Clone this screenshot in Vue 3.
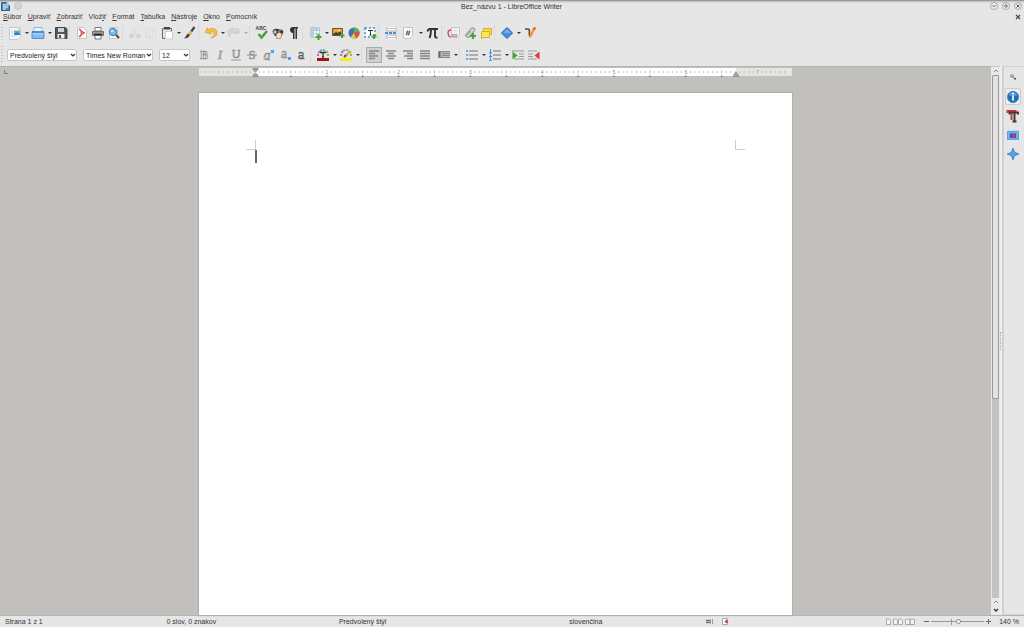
<script setup>
import { ref } from 'vue'

const menus = [
  ['', 'S', 'úbor'],
  ['', 'U', 'praviť'],
  ['', 'Z', 'obraziť'],
  ['Vlož', 'i', 'ť'],
  ['', 'F', 'ormát'],
  ['', 'T', 'abuľka'],
  ['', 'N', 'ástroje'],
  ['', 'O', 'kno'],
  ['', 'P', 'omocník']
]

const t = (icon, label, extra = {}) => ({ icon, label, ...extra })
const letter = (text, x, y, kind) => ({ letter: { text, x, y, kind } })

const standardBar = [
  { items: [t('new', 'Nový', { drop: true }), t('open', 'Otvoriť', { drop: true }), t('save', 'Uložiť')] },
  { items: [t('pdf', 'Exportovať ako PDF'), t('print', 'Tlačiť'), t('preview', 'Ukážka tlače')] },
  { items: [t('cut', 'Vystrihnúť', { off: true }), t('copy', 'Kopírovať', { off: true }), t('paste', 'Vložiť', { drop: true }), t('clone', 'Klonovať formátovanie')] },
  { items: [t('undo', 'Späť', { drop: true }), t('redo', 'Znovu', { drop: true, off: true })] },
  { items: [t('spell', 'Pravopis', letter('ABC', 7, 5, 'abc')), t('find', 'Nájsť a nahradiť'), t('pilcrow', 'Formátovacie znaky')] },
  { items: [t('table', 'Tabuľka', { drop: true }), t('image', 'Obrázok'), t('chart', 'Graf'), t('textbox', 'Textové pole')] },
  { roomy: true, items: [t('break', 'Zalomenie strany'), t('field', 'Pole', { drop: true }), t('pi', 'Špeciálny znak')] },
  { items: [t('footnote', 'Poznámka pod čiarou'), t('link', 'Odkaz'), t('comment', 'Komentár')] },
  { items: [t('shapes', 'Tvary', { drop: true }), t('draw', 'Kresba')] }
]

const formatBar = [
  {
    items: [
      t('bold', 'Tučné', letter('B', 8, 12, 'heavy')),
      t('italic', 'Kurzíva', letter('I', 8, 12, 'slant')),
      t('underline', 'Podčiarknuté', letter('U', 8, 11, 'plain')),
      t('strike', 'Prečiarknuté', letter('S', 8, 12, 'plain')),
      t('super', 'Horný index', letter('a', 7, 13, 'slant big')),
      t('sub', 'Dolný index', letter('a', 8, 11, 'plain big')),
      t('shadow', 'Tieň', letter('a', 9, 12, 'dark big'))
    ]
  },
  { items: [t('fontcolor', 'Farba písma', { drop: true }), t('highlight', 'Zvýraznenie', { drop: true })] },
  { roomy: true, items: [t('left', 'Zarovnať vľavo', { on: true }), t('center', 'Na stred'), t('right', 'Zarovnať vpravo'), t('justify', 'Do bloku')] },
  { plain: true, items: [t('spacing', 'Riadkovanie', { drop: true })] },
  { items: [t('bullets', 'Odrážky', { drop: true }), t('numbers', 'Číslovanie', { drop: true }), t('indent', 'Zväčšiť odsadenie'), t('outdent', 'Zmenšiť odsadenie')] }
]

const sidebar = [
  t('info', 'Vlastnosti', { on: true }),
  t('styles', 'Štýly'),
  t('gallery', 'Galéria'),
  t('navigator', 'Navigátor')
]

const inch = 71.8
const origin = 56
const ticks = []
for (let i = -12; i <= 118; i++) {
  const x = origin + (i * inch) / 16
  if (i !== 0 && i % 16 !== 0 && x > 1 && x < 592) ticks.push({ x, half: i % 8 === 0 })
}
const numbers = [1, 2, 3, 4, 5, 6, 7].map((n) => ({ n, x: origin + n * inch }))
const tabs = Array.from({ length: 13 }, (_, i) => origin + ((i + 1) * inch) / 2)

const style = ref('Predvolený štýl')
const font = ref('Times New Roman')
const size = ref('12')
const zoom = ref(51)
</script>

<template>
  <svg class="defs" aria-hidden="true">
    <symbol id="writer" viewBox="0 0 9 9"><path d="M.5.5h5l3 3v5h-8z" fill="#4a90bf" stroke="#285f83" /><path d="M2 3h3M2 5h5M2 7h3" stroke="#fff" /><path d="M5.500.5v3h3" fill="#d5e9f5" /></symbol>
    <symbol id="new" viewBox="0 0 16 16"><path d="M2.500 2.500h11v9l-3 3h-8z" fill="#f8f8f8" stroke="#c4cacd" /><path d="M7 5.500h6v4H7z" fill="#58b5e8" /><path d="m7 9 3-2 3 2v1H7z" fill="#3280bd" /><circle cx="12" cy="4" r="1.500" fill="#f3df73" /><path d="M4 6h2M4 8h2M4 11h6" stroke="#ccc" /></symbol>
    <symbol id="open" viewBox="0 0 16 16"><path d="M4 2.500h8v7H4z" fill="#eef4fb" stroke="#9bb7d5" /><path d="M2.500 6v7h11V6" fill="#4b8edb" stroke="#3b78be" /><path d="M2 7.500h12v6H2z" fill="#84bbf3" stroke="#538fd4" /><path d="M3 9h10" stroke="#b9dcfc" /></symbol>
    <symbol id="save" viewBox="0 0 16 16"><path d="M2.500 2.500h10l1.500 1.500v9.500H2.500z" fill="#555" stroke="#444" /><path d="M5 3h6v4H5z" fill="#c9d3db" /><path d="M4.500 9h7v4.500h-7z" fill="#eee" /><path d="M6 10h2v3H6z" fill="#555" /></symbol>
    <symbol id="pdf" viewBox="0 0 16 16"><path d="M3.500 2.500h6l3 3v8h-9z" fill="#fff" stroke="#c4c4c4" /><path d="M5 4c2 2 4 4 6 4-2 0-4 2-6 4M6 4c2 3 2 5 0 8" fill="none" stroke="#df4444" stroke-width="1.200" /></symbol>
    <symbol id="print" viewBox="0 0 16 16"><path d="M5 2.500h6V6H5zM5 10h6v4H5z" fill="#fff" stroke="#777" /><path d="M2.500 6.500h11v4h-11z" fill="#999" stroke="#707070" /><path d="M4 9.500h8" stroke="#222" stroke-width="1.500" /></symbol>
    <symbol id="preview" viewBox="0 0 16 16"><path d="M3.500 2.500h8v11h-8z" fill="#fff" stroke="#c8c8c8" /><circle cx="7" cy="7" r="3.500" fill="#7fbdec" stroke="#4a89bd" stroke-width="1.300" /><circle cx="6" cy="6" r="1.200" fill="#d7f0ff" /><path d="m10 10 3 3" stroke="#444" stroke-width="2" /></symbol>
    <symbol id="cut" viewBox="0 0 16 16"><g fill="none" stroke="#bdbdbd"><path d="m5 3 5 7M10 3 6 10" stroke="#dcdcdc" /><circle cx="4.500" cy="11" r="1.500" /><circle cx="11.500" cy="11" r="1.500" /></g></symbol>
    <symbol id="copy" viewBox="0 0 16 16"><path d="M3.500 3.500h6v8h-6zM6.500 5.500h6v8h-6z" fill="#eaeaea" stroke="#dbdbdb" /></symbol>
    <symbol id="paste" viewBox="0 0 16 16"><path d="M3.500 3.500h9v10h-9z" fill="#e4e4e4" stroke="#666" /><path d="M5 2h6v2.500H5z" fill="#444" /><path d="M6.500 6.500h7v7.500h-7z" fill="#fff" stroke="#ccc" /></symbol>
    <symbol id="clone" viewBox="0 0 16 16"><path d="m12.500 2-5 7" stroke="#444" stroke-width="2.200" /><path d="m9.500 6.500-3 3" stroke="#e6bd55" stroke-width="2.500" /><path d="M6 8.500 8 10c-1 2.500-3 3.500-6 3.500C4 12 4 10 6 8.500z" fill="#444" /></symbol>
    <symbol id="undo" viewBox="0 0 16 16"><path d="M2.500 7.500 4 3l1.500 1.500c4-2.500 8.500-.5 8.500 3 0 3-2.500 5-6 5.500 2.500-1.500 3.500-3 3-4.500-.5-2-2.500-2-4-1l1.500 1.500z" fill="#f2c040" stroke="#d39a2a" stroke-width=".7" /></symbol>
    <symbol id="redo" viewBox="0 0 16 16"><path d="M13.500 7.500 12 3l-1.500 1.500C6.500 2 2 4 2 7.500 2 10 3 11 4 12c0-4 2-5 5-4.500L8 9z" fill="#d6d6d6" stroke="#c6c6c6" stroke-width=".7" /></symbol>
    <symbol id="spell" viewBox="0 0 16 16"><path d="m4.500 9 3 3.500L13 6" fill="none" stroke="#48a043" stroke-width="2.500" /></symbol>
    <symbol id="find" viewBox="0 0 16 16"><path d="M2.500 7c0-3 3-4 5.500-3s5 0 5.500 3l-2 4H5z" fill="#3c3c3c" /><circle cx="5" cy="7" r="1.700" fill="#b9c3c8" /><path d="m8 7 4-3" stroke="#a7b8c2" /><path d="M6 9.500 9 7l3 2-1.500 4.500h-4z" fill="#f0dfc8" stroke="#876747" stroke-width=".6" /></symbol>
    <symbol id="pilcrow" viewBox="0 0 16 16"><path d="M12 2H7C4.500 2 4 3.500 4 5s1 3 3 3v6h1.500V3.500h1V14H11V3.500h1z" fill="#333" /></symbol>
    <symbol id="table" viewBox="0 0 16 16"><path d="M3.500 2.500h9v10h-9z" fill="#fff" stroke="#bac8d4" /><path d="M4 3h8v2H4zM4 3h2v9H4z" fill="#b6d5ed" /><path d="M3 5.500h9M3 8.500h9M6.500 3v9M9.500 3v9" stroke="#bac8d4" /><path d="M11.500 9v6M8.500 12h6" stroke="#46a536" stroke-width="2" /></symbol>
    <symbol id="image" viewBox="0 0 16 16"><path d="M2.500 3.500h10v7h-10z" fill="#efa332" stroke="#555" /><path d="m3 9 3-2 2 1 2-2 2 3v1H3z" fill="#573825" /><circle cx="9" cy="5.500" r="1" fill="#fff08a" /><path d="M12 8v5M9.500 10.500h5" stroke="#46a536" stroke-width="2" /></symbol>
    <symbol id="chart" viewBox="0 0 16 16"><circle cx="8" cy="8" r="5.500" fill="#3b79ae" /><path d="M8 8V2.500a5.500 5.500 0 0 1 5.200 3.800z" fill="#5cb659" /><path d="m8 8 5.200-1.700c1 3-.7 5.700-3.200 6.900z" fill="#e3532f" /><path d="m8 8 2 5.200c-2 .7-4 .2-5.500-1z" fill="#efc845" /></symbol>
    <symbol id="textbox" viewBox="0 0 16 16"><path d="M3 3h10v9H3z" fill="#fff" stroke="#4b92d1" stroke-width="1.500" stroke-dasharray="2 2" /><path d="M6 5.500h5M8.500 5v5M7.500 10h2" stroke="#333" /><path d="M12 9v5M9.500 11.500h5" stroke="#46a536" stroke-width="2" /></symbol>
    <symbol id="break" viewBox="0 0 16 16"><path d="M4 2v4h9V2M4 14v-4h9v4" fill="#fff" stroke="#adb5b9" /><path d="M5 3.500h7M5 12.500h7" stroke="#c0c0c0" /><path d="M2 8h12" stroke="#4c8dca" stroke-width="2" stroke-dasharray="3 1" /></symbol>
    <symbol id="field" viewBox="0 0 16 16"><path d="M3.500 2.500h9v8l-3 3h-6z" fill="#fff" stroke="#c4c4c4" /><path d="m7.500 5.500-1 5M9.500 5.500l-1 5M6 7h4.500M5.500 9H10" stroke="#444" stroke-width=".8" /></symbol>
    <symbol id="pi" viewBox="0 0 16 16"><path d="M2.500 6.500Q3 4 5 4h8M6 4.500Q6 10 4.500 13M10 4.500V11q0 2 2.500 1.500" fill="none" stroke="#333" stroke-width="1.900" /></symbol>
    <symbol id="footnote" viewBox="0 0 16 16"><path d="M5.500 2.500h8v8l-2 2h-6z" fill="#f6f6f6" stroke="#c4c4c4" /><path d="M7 5h5M7 7h5" stroke="#ddd" /><path d="M5 5q-3 0-3 3t2.500 4.500" fill="none" stroke="#d74444" stroke-width="1.300" /><path d="M6 9.500h5v2H6z" fill="#a8cef0" stroke="#ce4b4b" stroke-width=".5" /></symbol>
    <symbol id="link" viewBox="0 0 16 16"><path d="m3 11 6-7c2-2 5 0 3 2L7 12c-2 1-3-1-2-2l4-4" fill="none" stroke="#a6a6a6" stroke-width="1.600" /><path d="M11 8v6M8 11h6" stroke="#4aa63a" stroke-width="2.200" /></symbol>
    <symbol id="comment" viewBox="0 0 16 16"><path d="M5.500 3.500h8v6h-8z" fill="#f6d946" stroke="#d9af2c" /><path d="M3.500 6.500h8v6H6l-2.500 1z" fill="#ffe65e" stroke="#d9af2c" /></symbol>
    <symbol id="shapes" viewBox="0 0 16 16"><path d="m8 2.500 5.500 5.500L8 13.500 2.500 8z" fill="#4390e0" stroke="#1f61a9" /><path d="m8 4 4 4H4z" fill="#71b0ef" /></symbol>
    <symbol id="draw" viewBox="0 0 16 16"><path d="M3 4h3c3 0 0 5 2 8" fill="none" stroke="#5d4a3a" stroke-width="1.600" /><path d="M12.500 3 8 12" stroke="#f19c28" stroke-width="2.500" /><path d="m12 2 2 1-1 2-2-1z" fill="#cf532e" /></symbol>

    <symbol id="underline" viewBox="0 0 16 16"><path d="M3 13h10" stroke="#999" /></symbol>
    <symbol id="strike" viewBox="0 0 16 16"><path d="M3 8h10" stroke="#888" /></symbol>
    <symbol id="super" viewBox="0 0 16 16"><path d="M11 3h3v3h-3z" fill="#4d9af0" /></symbol>
    <symbol id="sub" viewBox="0 0 16 16"><path d="M12 10h3v3h-3z" fill="#4d9af0" /></symbol>
    <symbol id="rainbow" viewBox="0 0 16 16"><g fill="none" stroke-width="2" stroke-dasharray="2 1"><path d="M3 9Q3 6 5 4" stroke="#ba65bd" /><path d="M5 4q1.500-1 3-1" stroke="#628fd3" /><path d="M8 3q2 0 3.500 1.500" stroke="#5eb4a0" /><path d="M11.500 4.500Q13 6 13 9" stroke="#81b85c" /></g></symbol>
    <symbol id="fontcolor" viewBox="0 0 16 16"><use href="#rainbow" width="16" height="16" /><path d="M5 5.500h6M8 5v5M7 10h2" stroke="#333" stroke-width="1.300" /><path d="M2 11h12v3H2z" fill="#a51212" /></symbol>
    <symbol id="highlight" viewBox="0 0 16 16"><use href="#rainbow" width="16" height="16" /><path d="m7 10 5-6" stroke="#e8a73a" stroke-width="2" /><path d="m6 10 2-2" stroke="#555" stroke-width="2" /><path d="M2 11h12v3H2z" fill="#f5ed24" /></symbol>
    <symbol id="left" viewBox="0 0 16 16"><path d="M3 4h10M3 6.500h6M3 9h9M3 11.500h6" stroke="#858585" stroke-width="1.300" /></symbol>
    <symbol id="center" viewBox="0 0 16 16"><path d="M3 4h10M5 6.500h6M3 9h10M5 11.500h6" stroke="#858585" stroke-width="1.300" /></symbol>
    <symbol id="right" viewBox="0 0 16 16"><path d="M3 4h10M7 6.500h6M4 9h9M7 11.500h6" stroke="#858585" stroke-width="1.300" /></symbol>
    <symbol id="justify" viewBox="0 0 16 16"><path d="M3 4h10M3 6.500h10M3 9h10M3 11.500h10" stroke="#858585" stroke-width="1.300" /></symbol>
    <symbol id="spacing" viewBox="0 0 16 16"><path d="M2 4h12v7H2z" fill="#bcbcbc" /><path d="M2 4.500h12M6 6.500h8M6 8.500h8M2 10.500h12" stroke="#888" /><path d="M3.500 5v5" stroke="#666" stroke-width="2" /></symbol>
    <symbol id="bullets" viewBox="0 0 16 16"><path d="M5 4h9M5 8h9M5 12h9" stroke="#999" stroke-width="1.300" /><path d="M2 4h2M2 8h2M2 12h2" stroke="#4d91dd" stroke-width="1.500" /></symbol>
    <symbol id="numbers" viewBox="0 0 16 16"><path d="M6 4h8M6 8h8M6 12h8" stroke="#999" stroke-width="1.300" /><path d="M3.500 2v12M2 5.500h3M2 9.500h3M2 13.500h3" stroke="#5598e3" stroke-width="1.200" /></symbol>
    <symbol id="indent" viewBox="0 0 16 16"><path d="M2 4h6M8 4h6M9 7h5M9 9.500h5M4 12h10" stroke="#999" /><path d="m2.500 4.500 5 4-5 4z" fill="#40a52f" /></symbol>
    <symbol id="outdent" viewBox="0 0 16 16"><path d="M2 4h9M2 7h5M2 9.500h5M2 12h9" stroke="#999" /><path d="m13.500 4.500-5 4 5 4z" fill="#e63636" /></symbol>

    <symbol id="info" viewBox="0 0 16 16"><circle cx="8" cy="8" r="5.700" fill="#216fba" stroke="#3c7db8" stroke-width=".6" /><path d="M3.500 6a5 5 0 0 1 9 0q-4.500 2-9 0z" fill="#5f9fdb" /><path d="M8 6.500v5" fill="none" stroke="#fff" stroke-width="1.700" /><circle cx="8" cy="4.500" r="1" fill="#fff" /></symbol>
    <symbol id="styles" viewBox="0 0 16 16"><path d="M2.500 5V3h9M6.500 3v9" fill="none" stroke="#d63232" stroke-width="2" /><path d="M4.500 6.500V4.500h8.500v2M9.500 5v8.500M7.500 13.500h4" fill="none" stroke="#3a3a3a" stroke-width="2" /></symbol>
    <symbol id="gallery" viewBox="0 0 16 16"><path d="M3 3h10v3H3z" fill="#bcdafa" /><path d="M2.500 4.500h11v8h-11z" fill="#73aef0" stroke="#659bdb" /><path d="M5 6.500h6v4.500H5z" fill="#3b4f9a" /><path d="M7 7.500h3v3H7z" fill="#c04b65" /></symbol>
    <symbol id="navigator" viewBox="0 0 16 16"><path d="m8 2 1.700 4.300L14 8 9.700 9.700 8 14 6.300 9.700 2 8l4.300-1.700z" fill="#56a2f0" stroke="#3279cf" stroke-width=".7" /></symbol>
  </svg>

  <div class="window">
    <header class="titlebar">
      <div class="side">
        <svg class="app-icon" aria-hidden="true"><use href="#writer" /></svg>
        <button class="round pale" aria-label="Na všetkých plochách"></button>
      </div>
      <h1>Bez_názvu 1 - LibreOffice Writer</h1>
      <div class="side end">
        <button class="round" aria-label="Minimalizovať"><svg viewBox="0 0 8 8"><path d="m2 3 2 2 2-2" /></svg></button>
        <button class="round" aria-label="Obnoviť"><svg viewBox="0 0 8 8"><path d="m4 2 2 2-2 2-2-2z" /></svg></button>
        <button class="round" aria-label="Zavrieť"><svg viewBox="0 0 8 8"><path d="m2 2 4 4M6 2 2 6" /></svg></button>
      </div>
    </header>

    <nav class="menubar">
      <button v-for="m in menus" :key="m.join('')">{{ m[0] }}<u>{{ m[1] }}</u>{{ m[2] }}</button>
      <button class="close-doc" aria-label="Zavrieť dokument"><svg viewBox="0 0 6 6"><path d="m1 1 4 4M5 1 1 5" /></svg></button>
    </nav>

    <div class="toolbar" role="toolbar" aria-label="Štandardný">
      <span class="grip"></span>
      <div v-for="(g, i) in standardBar" :key="i" class="group" :class="{ roomy: g.roomy }">
        <template v-for="b in g.items" :key="b.icon">
          <button class="tool" :aria-label="b.label" :disabled="b.off">
            <svg viewBox="0 0 16 16">
              <use :href="'#' + b.icon" width="16" height="16" />
              <text v-if="b.letter" :x="b.letter.x" :y="b.letter.y" text-anchor="middle" :class="b.letter.kind">{{ b.letter.text }}</text>
            </svg>
          </button>
          <button v-if="b.drop" class="drop" :class="{ faded: b.off }" :aria-label="b.label + ', viac'"></button>
        </template>
      </div>
    </div>

    <div class="toolbar" role="toolbar" aria-label="Formátovanie">
      <span class="grip"></span>
      <div class="combo wide">
        <select v-model="style" aria-label="Štýl odseku"><option>Predvolený štýl</option></select>
        <svg viewBox="0 0 6 6"><path d="m1 2 2 2 2-2" /></svg>
      </div>
      <div class="combo wide">
        <select v-model="font" aria-label="Názov písma"><option>Times New Roman</option></select>
        <svg viewBox="0 0 6 6"><path d="m1 2 2 2 2-2" /></svg>
      </div>
      <div class="combo">
        <select v-model="size" aria-label="Veľkosť písma"><option>12</option></select>
        <svg viewBox="0 0 6 6"><path d="m1 2 2 2 2-2" /></svg>
      </div>
      <div v-for="(g, i) in formatBar" :key="i" class="group" :class="{ roomy: g.roomy, plain: g.plain, first: i === 0 }">
        <template v-for="b in g.items" :key="b.icon">
          <button class="tool" :class="{ pressed: b.on }" :aria-label="b.label">
            <svg viewBox="0 0 16 16">
              <text v-if="b.letter" :x="b.letter.x" :y="b.letter.y" text-anchor="middle" class="outline" :class="b.letter.kind">{{ b.letter.text }}</text>
              <use :href="'#' + b.icon" width="16" height="16" />
            </svg>
          </button>
          <button v-if="b.drop" class="drop" :aria-label="b.label + ', viac'"></button>
        </template>
      </div>
    </div>

    <main class="workspace">
      <section class="canvas">
        <button class="tab-type" aria-label="Typ tabulátora"><svg viewBox="0 0 4 4"><path d="M.5 0v3.500H4" /></svg></button>
        <svg class="ruler" viewBox="0 0 593 9" role="img" aria-label="Pravítko">
          <rect width="593" height="8" fill="#e4e4e3" />
          <rect x="56" width="481" height="8" fill="#fff" />
          <path v-for="k in ticks" :key="k.x" :d="k.half ? `M${k.x} 2v4` : `M${k.x} 3v2`" stroke="#b4b4b4" stroke-width=".8" />
          <path v-for="x in tabs" :key="x" :d="`M${x - 1.5} 9l1.500-2 1.500 2z`" fill="#888" />
          <text v-for="k in numbers" :key="k.n" :x="k.x" y="6" text-anchor="middle" class="ruler-number">{{ k.n }}</text>
          <path d="M54 0h5v2l-2.500 2L54 2zM54 9V7l2.500-2L59 7v2zM534.500 9V7l2.500-3 2.500 3v2z" fill="#a0a0a0" stroke="#777" stroke-width=".5" />
        </svg>
        <article class="page">
          <div class="text-area" contenteditable="true" role="textbox" aria-label="Text dokumentu">
            <i class="corner start"></i><i class="corner finish"></i><i class="caret"></i>
          </div>
        </article>
      </section>
      <div class="scrollbar">
        <button aria-label="Hore"><svg viewBox="0 0 6 6"><path d="m1 4 2-2 2 2" /></svg></button>
        <div class="track"><div class="thumb"></div></div>
        <button aria-label="Predchádzajúca strana"><svg viewBox="0 0 6 6"><path d="m1 4 2-2 2 2" /></svg></button>
        <button class="strong" aria-label="Dole"><svg viewBox="0 0 6 6"><path d="m1 2 2 2 2-2" /></svg></button>
      </div>
      <div class="splitter"><span></span></div>
      <aside class="sidebar">
        <button class="config" aria-label="Nastavenia panela"><svg viewBox="0 0 8 8"><circle cx="3" cy="3" r="1.500" fill="#b8b8b8" stroke="#888" stroke-width=".7" /><path d="m4 4 2 2" stroke="#777" /><path d="M5 5h2v1.500H5z" fill="#245a79" /></svg></button>
        <button v-for="s in sidebar" :key="s.icon" class="deck" :class="{ active: s.on }" :aria-label="s.label"><svg><use :href="'#' + s.icon" /></svg></button>
      </aside>
    </main>

    <footer class="status">
      <span>Strana 1 z 1</span>
      <span>0 slov, 0 znakov</span>
      <span>Predvolený štýl</span>
      <span>slovenčina</span>
      <span class="flags">
        <svg viewBox="0 0 7 7"><path d="M0 2.500h5M0 4.500h5" stroke="#777" stroke-width="1.500" /><path d="M6.500 1v5" stroke="#999" /></svg>
        <svg viewBox="0 0 7 7"><path d="M.5.5h5v6h-5z" fill="#fff" stroke="#aaa" /><path d="m4.500 1.500 2 2-2 2-2-2z" fill="#d63c45" /></svg>
      </span>
      <span class="views">
        <button aria-label="Jedna strana"><svg class="one" viewBox="0 0 5 7"><path d="M.5 1h2.500L4.500 2.500v4h-4z" /></svg></button>
        <button aria-label="Viac strán"><svg viewBox="0 0 10 7"><path d="M.5 1H3l1.500 1.500v4h-4zM5.500 1H8l1.500 1.500v4h-4z" /></svg></button>
        <button aria-label="Kniha"><svg viewBox="0 0 10 7"><path d="M.5 1.500q2-1 4.500 0v5H.500zM5 1.500q2.500-1 4.500 0v5H5z" /></svg></button>
      </span>
      <span class="zoom">
        <button aria-label="Zmenšiť"><svg viewBox="0 0 5 7"><path d="M0 3.500h5" /></svg></button>
        <input v-model="zoom" type="range" min="0" max="100" aria-label="Mierka" />
        <button aria-label="Zväčšiť"><svg viewBox="0 0 5 7"><path d="M0 3.500h5M2.500 1v5" /></svg></button>
        <output>140 %</output>
      </span>
    </footer>
  </div>
</template>

<style>
body {
  margin: 0;
  background: #e6e6e6;
}
</style>

<style scoped>
.defs {
  position: absolute;
  width: 0;
  height: 0;
}
.window {
  display: flex;
  flex-direction: column;
  height: 100vh;
  overflow: hidden;
  background: #e6e6e6;
  color: #333;
  font: 7px/9px "Liberation Sans", Arial, sans-serif;
}
.window *,
.window {
  box-sizing: border-box;
}
button {
  margin: 0;
  padding: 0;
  border: 0;
  background: none;
  color: inherit;
  font: inherit;
}
svg {
  display: block;
}
.titlebar {
  display: flex;
  align-items: center;
  height: 11px;
  flex: none;
  padding: 0 2px 0 1px;
  border-top: 1px solid #999;
  background: linear-gradient(#bcbcbc, #e6e6e6 2px);
}
.titlebar h1 {
  margin: 0;
  font-size: 7px;
  font-weight: 400;
}
.side {
  display: flex;
  flex: 1;
  align-items: center;
  gap: 4px;
}
.side.end {
  justify-content: flex-end;
}
.app-icon {
  width: 9px;
  height: 9px;
}
.round {
  width: 8px;
  height: 8px;
  border: 1px solid #aaa;
  border-radius: 50%;
  background: #eee;
}
.round.pale {
  border-color: #c4c4c4;
  background: #d6d6d6;
}
.round svg {
  width: 6px;
  height: 6px;
  fill: none;
  stroke: #444;
  stroke-width: 1.200;
}
.menubar {
  display: flex;
  align-items: center;
  flex: none;
  gap: 6px;
  height: 11px;
  padding: 0 3px;
}
.menubar .close-doc {
  margin-left: auto;
}
.close-doc svg {
  width: 6px;
  height: 6px;
  stroke: #444;
  stroke-width: 1.200;
}
.toolbar {
  display: flex;
  align-items: center;
  flex: none;
  height: 22px;
}
.grip {
  width: 2px;
  height: 18px;
  margin: 0 4px 0 1px;
  background: repeating-linear-gradient(#c2c2c2 0 1px, transparent 1px 3px);
}
.group {
  display: flex;
  align-items: center;
}
.group.roomy {
  gap: 1px;
}
.group + .group {
  padding-left: 4px;
  border-left: 1px solid #dadada;
}
.group + .group.plain {
  padding-left: 3px;
  border-left: 0;
}
.group.first {
  padding-right: 2px;
}
.tool,
.tool svg {
  width: 16px;
  height: 16px;
}
.tool.pressed {
  border-radius: 1px;
  background: #d0d0d0;
  box-shadow: inset 0 0 0 1px #aaa;
}
.drop {
  display: grid;
  place-items: center;
  width: 7px;
  height: 16px;
}
.drop::before {
  content: "";
  border: 2px solid transparent;
  border-top-color: #333;
  border-bottom-width: 0;
}
.drop.faded::before {
  border-top-color: #aaa;
}
.combo {
  position: relative;
  width: 31px;
  margin-right: 6px;
}
.combo.wide {
  width: 70px;
}
.combo select {
  display: block;
  width: 100%;
  height: 12px;
  padding: 0 4px 0 2px;
  border: 1px solid #c6c6c6;
  border-radius: 2px;
  appearance: none;
  background: #fff;
  color: #222;
  font: inherit;
}
.combo svg {
  position: absolute;
  top: 3px;
  right: 1px;
  width: 6px;
  height: 6px;
  fill: none;
  stroke: #333;
  stroke-width: 1.200;
  pointer-events: none;
}
.abc {
  font: 700 5px "Liberation Sans", sans-serif;
  fill: #444;
}
.outline {
  font-family: "Liberation Serif", serif;
  font-size: 12px;
  fill: #f2f2f2;
  stroke: #888;
  stroke-width: 0.700px;
}
.big {
  font-size: 14px;
}
.heavy {
  font-weight: 700;
}
.slant {
  font-style: italic;
}
.dark {
  fill: #ddd;
  stroke: #555;
}
.workspace {
  display: flex;
  flex: 1;
  min-height: 0;
}
.canvas {
  position: relative;
  display: flex;
  flex: 1;
  flex-direction: column;
  align-items: center;
  gap: 16px;
  min-width: 0;
  padding-top: 1px;
  border-top: 1px solid #b4b4b2;
  background: #c1c0bd;
}
.tab-type {
  position: absolute;
  top: 3px;
  left: 4px;
}
.tab-type svg {
  width: 4px;
  height: 4px;
  fill: none;
  stroke: #777;
}
.ruler {
  flex: none;
  width: 593px;
  height: 9px;
}
.ruler-number {
  fill: #888;
  font: 5px "Liberation Sans", sans-serif;
}
.page {
  flex: 1;
  width: 593px;
  padding: 57px 56px 0;
  background: #fff;
  box-shadow: 0 0 1px 1px #b0afac;
}
.text-area {
  position: relative;
  height: 100%;
  outline: 0;
}
.corner {
  position: absolute;
  top: -10px;
  width: 10px;
  height: 10px;
  border: 0 solid #cdcdcd;
  border-bottom-width: 1px;
}
.corner.start {
  left: -9px;
  border-right-width: 1px;
}
.corner.finish {
  right: -9px;
  border-left-width: 1px;
}
.caret {
  position: absolute;
  top: 0;
  left: 0;
  width: 2px;
  height: 13px;
  background: #666;
}
.scrollbar {
  display: flex;
  flex-direction: column;
  width: 9px;
  padding-bottom: 1px;
  border-top: 1px solid #c8c8c8;
  background: #e9e9e9;
}
.scrollbar button {
  display: grid;
  place-items: center;
  height: 8px;
}
.scrollbar svg {
  width: 6px;
  height: 6px;
  fill: none;
  stroke: #888;
}
.scrollbar .strong svg {
  stroke: #333;
  stroke-width: 1.300;
}
.track {
  flex: 1;
  margin: 0 1px;
  background: #c4c3c3;
}
.thumb {
  height: 62%;
  border: 1px solid #9a989a;
  border-radius: 1px;
  background: #e3e1e3;
}
.splitter {
  display: grid;
  align-items: center;
  width: 3px;
  border-right: 1px solid #cecece;
  background: #eee;
}
.splitter span {
  height: 18px;
  border-left: 1px dotted #aaa;
}
.sidebar {
  display: flex;
  flex-direction: column;
  align-items: center;
  width: 21px;
  padding-right: 2px;
  border: 1px solid #d3d3d3;
  border-right: 0;
}
.config {
  margin: 6px 0 7px;
}
.config svg {
  width: 8px;
  height: 8px;
}
.deck {
  display: grid;
  place-items: center;
  width: 16px;
  height: 17px;
  margin-bottom: 2px;
}
.deck.active {
  border-radius: 2px;
  background: #ececec;
  box-shadow: inset 0 0 0 1px #ccc;
}
.deck svg {
  width: 16px;
  height: 16px;
}
.status {
  display: grid;
  grid-template-columns: 162fr 173fr 231fr 137fr 181fr 38fr auto;
  align-items: center;
  flex: none;
  height: 12px;
  padding: 0 5px;
  border-top: 1px solid #b4b4b4;
}
.flags {
  display: flex;
  gap: 9px;
}
.flags svg {
  width: 7px;
  height: 7px;
}
.views {
  display: flex;
  gap: 2px;
}
.views svg {
  width: 10px;
  height: 7px;
  fill: #f3f3f3;
  stroke: #999;
  stroke-width: 0.800;
}
.views svg.one {
  width: 5px;
}
.zoom {
  display: flex;
  align-items: center;
}
.zoom svg {
  width: 5px;
  height: 7px;
  stroke: #666;
}
.zoom input {
  width: 53px;
  height: 7px;
  margin: 0 2px;
  appearance: none;
  background: linear-gradient(#999, #999) 50% 50% / 100% 1px no-repeat, linear-gradient(#999, #999) 20px 50% / 1px 6px no-repeat;
}
.zoom input::-webkit-slider-thumb {
  width: 5px;
  height: 5px;
  border: 1px solid #888;
  border-radius: 50%;
  appearance: none;
  background: #fff;
}
.zoom output {
  margin-left: 8px;
}
</style>
